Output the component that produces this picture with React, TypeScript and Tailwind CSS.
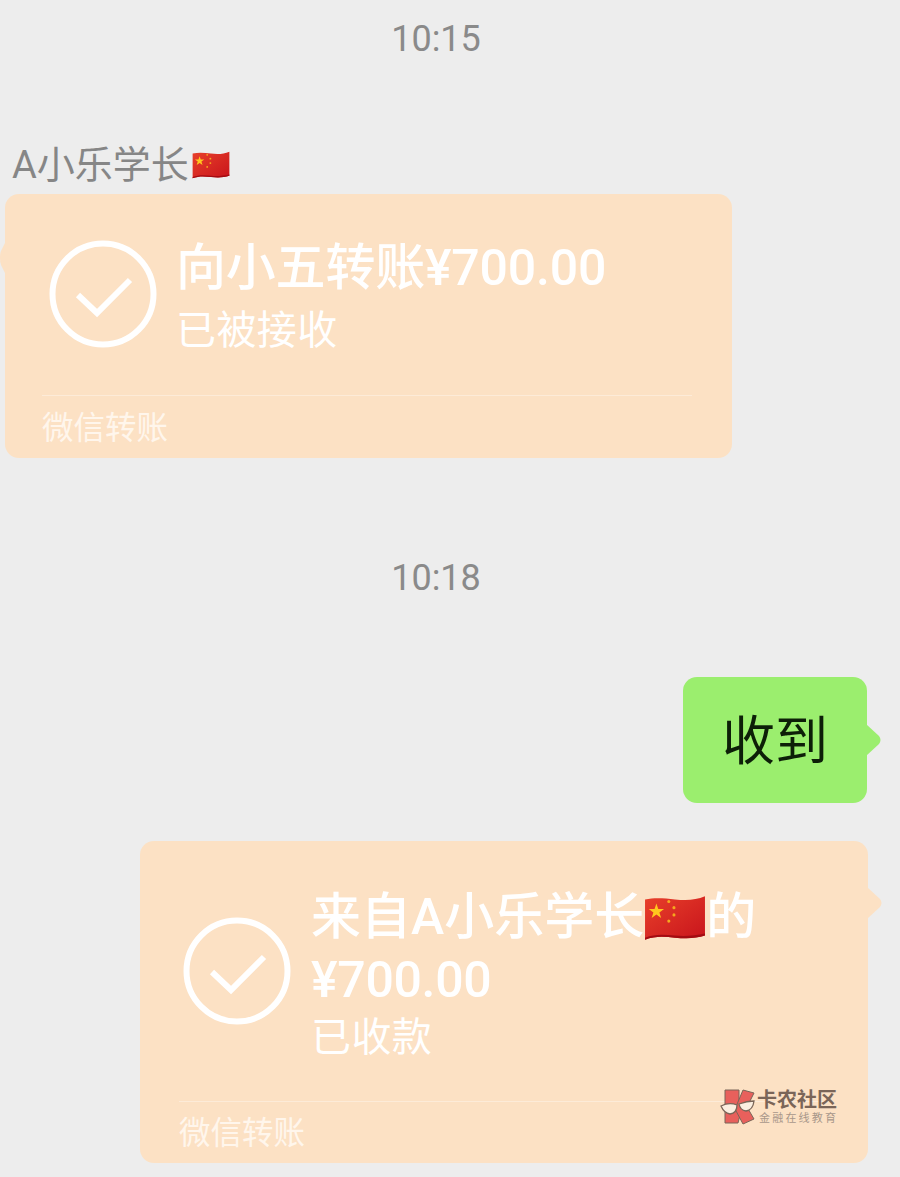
const FONT = "font-['Roboto','Noto_Sans_CJK_SC',sans-serif]";

function CnFlag({ className, id }: { className: string; id: string }) {
  return (
    <svg viewBox="0 0 60 44" className={className}>
      <defs>
        <linearGradient id={id} x1="0" y1="0" x2="1" y2="1">
          <stop offset="0" stopColor="#e8402a" />
          <stop offset="1" stopColor="#c8141c" />
        </linearGradient>
      </defs>
      <path d="M1 4c10-2 19-1 29 0s20 1 29-3v38c-9 3-19 3-29 2S11 39 1 43z" fill={`url(#${id})`} />
      <path d="M1 41c10-4 19-3 29-2s20 0 29-2v2c-9 3-19 3-29 2S11 39 1 43z" fill="#a30c12" />
      <path d="M12 8l1.800 5.300h5.600l-4.500 3.300 1.700 5.400-4.600-3.300-4.600 3.300 1.700-5.400-4.500-3.300h5.600z" fill="#ffc61e" />
      <circle cx="24" cy="6" r="1.500" fill="#f5a81e" />
      <circle cx="29" cy="12" r="1.500" fill="#f5a81e" />
      <circle cx="29" cy="19" r="1.500" fill="#f5a81e" />
      <circle cx="24" cy="25" r="1.500" fill="#f5a81e" />
    </svg>
  );
}

function CheckCircle() {
  return (
    <svg viewBox="0 0 108 108" className="w-[108px] h-[108px] shrink-0" fill="none" stroke="#fff">
      <circle cx="54" cy="54" r="50.500" strokeWidth="6" />
      <path d="M29 55l19 18 33-33" strokeWidth="6" />
    </svg>
  );
}

function Tail({ side, color, top }: { side: "left" | "right"; color: string; top: string }) {
  if (side === "left") {
    return (
      <svg viewBox="0 0 6 34" className={`absolute -left-[5px] w-[6px] h-[34px] ${top}`}>
        <path d="M6 0L1 10q-1 2-1 7t1 7l5 10z" fill={color} />
      </svg>
    );
  }
  return (
    <svg viewBox="0 0 16 32" className={`absolute -right-[15px] w-[16px] h-[32px] ${top}`}>
      <path d="M0 0l13 12q3 4 0 8L0 32z" fill={color} />
    </svg>
  );
}

function Watermark() {
  return (
    <div className="absolute left-[580px] top-[248px] flex items-center gap-[1px]">
      <svg viewBox="0 0 36 36" className="w-[36px] h-[36px]">
        <path d="M5 1h14v12l-5 5 6 8-2 8H5z" fill="#e8605c" stroke="#7a6558" strokeWidth="1" />
        <path d="M23 1l11 3-7 14 7 12-11 5-8-15z" fill="#e8605c" stroke="#7a6558" strokeWidth="1" />
        <path d="M1 17q8-4 16-1 0 8-7 9-6-1-9-8zM19 15q8-3 15-3-1 9-8 10-6-1-7-7z" fill="#fbeee0" stroke="#7a6558" strokeWidth="1.300" />
      </svg>
      <div className="flex flex-col">
        <span className="text-[20px] leading-[23px] font-bold text-[#7a6558] whitespace-nowrap">卡农社区</span>
        <span className="text-[11px] leading-[13px] pl-[2px] tracking-[2.200px] text-[#a8978a] whitespace-nowrap">金融在线教育</span>
      </div>
    </div>
  );
}

function TransferCard({
  className,
  tail,
  tailTop,
  children,
  dividerClass,
  labelHeight,
  extra,
}: {
  className: string;
  tail: "left" | "right";
  tailTop: string;
  children: React.ReactNode;
  dividerClass: string;
  labelHeight: string;
  extra?: React.ReactNode;
}) {
  return (
    <div className={`relative bg-[#fce1c4] rounded-[14px] flex flex-col ${className}`}>
      <Tail side={tail} color="#fce1c4" top={tailTop} />
      <div className="flex-1 min-h-0">{children}</div>
      <div className={`border-t border-[#fdebd8] ${dividerClass}`}>
        <div className={`text-[31.500px] text-[#fff6ec] ${labelHeight}`}>微信转账</div>
      </div>
      {extra}
    </div>
  );
}

export default function App() {
  return (
    <div className={`w-[900px] h-[1177px] bg-[#ededed] overflow-hidden flex flex-col ${FONT}`}>
      <div className="h-[78px] flex items-center justify-center text-[36px] text-[#8a8a8a] ml-[-28px]">10:15</div>

      {/* first message */}
      <div className="mt-[63px] pl-[12px] h-[53px] flex items-start text-[38px] leading-[48px] text-[#868686]">
        <span>A小乐学长</span>
        <CnFlag id="flag-a" className="w-[38px] h-[28px] ml-[3px] mt-[10px]" />
      </div>
      <TransferCard
        className="ml-[5px] w-[727px] h-[264px]"
        tail="left"
        tailTop="top-[47px]"
        dividerClass="mx-[37px] w-[650px]"
        labelHeight="h-[62px] leading-[66px]"
      >
        <div className="flex pl-[44px] pt-[46px]">
          <CheckCircle />
          <div className="ml-[19px] -mt-[3px] text-white">
            <div className="text-[50px] leading-[62px] font-medium whitespace-nowrap tracking-[-0.200px]">向小五转账¥700.00</div>
            <div className="text-[40px] leading-[64px] tracking-[0.400px]">已被接收</div>
          </div>
        </div>
      </TransferCard>

      <div className="mt-[95px] h-[50px] flex items-center justify-center text-[36px] text-[#8a8a8a] ml-[-28px]">10:18</div>

      {/* my reply */}
      <div className="mt-[74px] flex justify-end pr-[33px]">
        <div className="relative w-[184px] h-[126px] bg-[#9bee6e] rounded-[14px] flex items-center justify-center pt-[5px] text-[53px] text-[#0d1f08]">
          <Tail side="right" color="#9bee6e" top="top-[47px]" />
          收到
        </div>
      </div>

      <div className="mt-[38px] flex justify-end pr-[32px]">
        <TransferCard
          className="w-[728px] h-[322px]"
          tail="right"
          tailTop="top-[46px]"
          dividerClass="ml-[39px] mr-[39px]"
          labelHeight="h-[61px] leading-[63px]"
          extra={<Watermark />}
        >
          <div className="flex pl-[43px] pt-[76px]">
            <CheckCircle />
            <div className="ml-[20px] -mt-[31px] text-white">
              <div className="text-[50px] leading-[63px] font-medium whitespace-nowrap flex items-center">
                来自A小乐学长
                <CnFlag id="flag-b" className="w-[62px] h-[48px]" />
                的
              </div>
              <div className="text-[50px] leading-[63px] font-medium tracking-[-0.300px]">¥700.00</div>
              <div className="text-[40px] leading-[52px] tracking-[0.400px]">已收款</div>
            </div>
          </div>
        </TransferCard>
      </div>
    </div>
  );
}
